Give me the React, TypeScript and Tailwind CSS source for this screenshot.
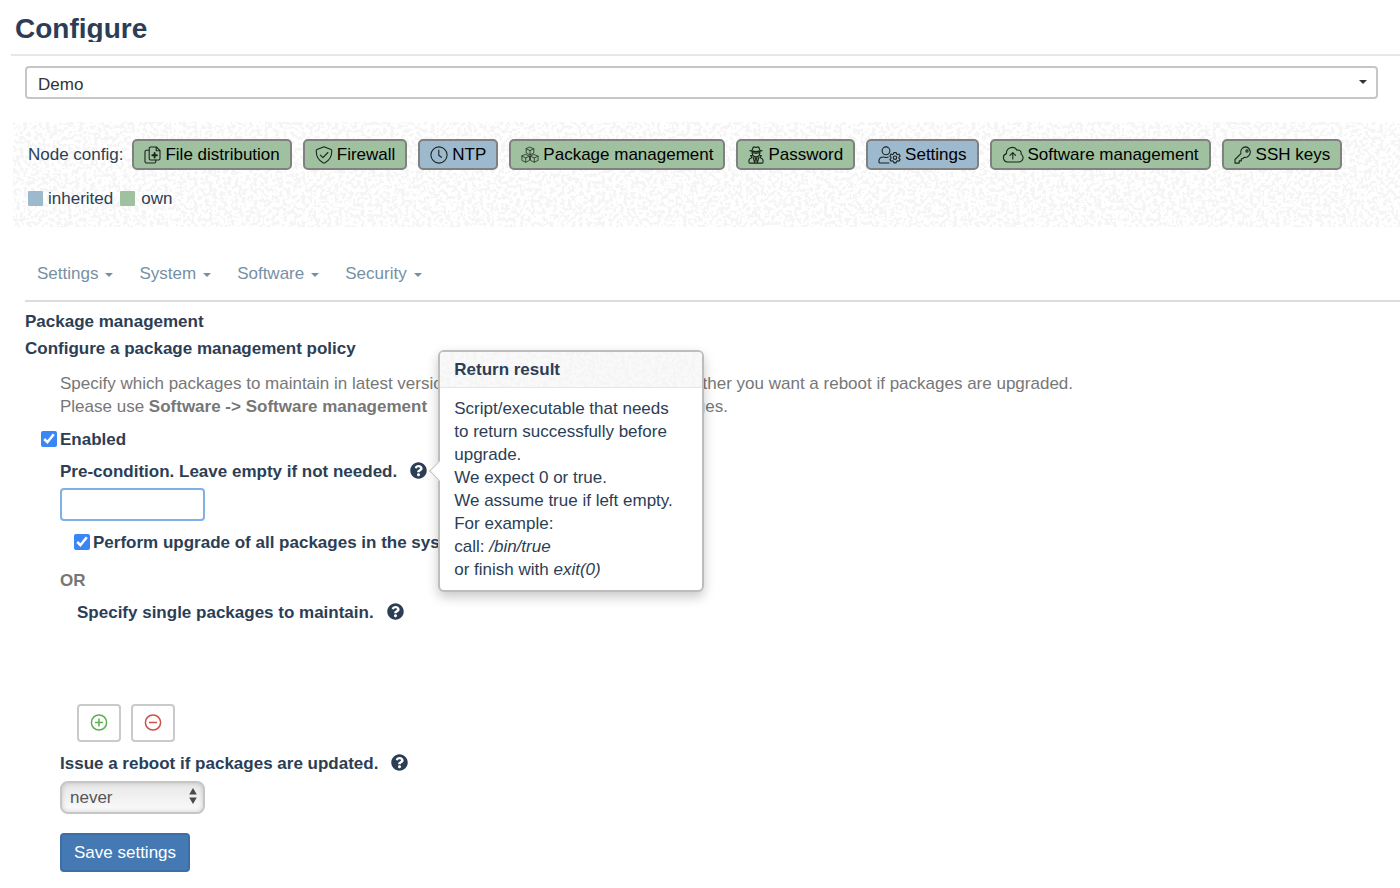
import type { ReactNode } from "react";
import { FaQuestionCircle } from "react-icons/fa";

function Glyph({ width = 18, children }: { width?: number; children: ReactNode }) {
  return (
    <svg
      aria-hidden="true"
      width={width}
      height={18}
      viewBox={`0 0 ${width} 18`}
      fill="none"
      stroke="#1c241c"
      strokeWidth={1.1}
      strokeLinecap="round"
      strokeLinejoin="round"
      className="shrink-0"
    >
      {children}
    </svg>
  );
}

const FileIcon = () => (
  <Glyph width={17}>
    <path d="M6.6 1h5.8L16 4.6v8a1.4 1.4 0 0 1-1.4 1.4h-8a1.4 1.4 0 0 1-1.4-1.4V2.4A1.4 1.4 0 0 1 6.6 1z" />
    <path d="M12.2 1.2v3.6h3.6" />
    <path d="M5 4.2H2.4A1.4 1.4 0 0 0 1 5.6v10A1.4 1.4 0 0 0 2.4 17h8a1.4 1.4 0 0 0 1.4-1.4V14" />
    <path d="M10.6 6.900v4.600M8.300 9.200h4.600" strokeWidth={1.9} />
  </Glyph>
);

const ShieldIcon = () => (
  <Glyph>
    <path d="M9 .8l7 2.800c.5.2.8.6.8 1.100 0 6-3.200 10.300-7.200 12.200a1.300 1.300 0 0 1-1.200 0C4.400 15 1.200 10.700 1.200 4.700c0-.5.3-.9.8-1.100z" />
    <path d="M5.400 9.200l2.500 2.500 5-5.200" />
  </Glyph>
);

const ClockIcon = () => (
  <Glyph>
    <circle cx="9" cy="9" r="8.100" />
    <path d="M8.800 4v5.300l2.600 2" />
  </Glyph>
);

const cube = (x: number, y: number) =>
  `M${x} ${y}l3.8 1.6v4.2l-3.8 1.8-3.8-1.8v-4.2zM${x - 3.8} ${y + 1.6}l3.8 1.7 3.8-1.7M${x} ${y + 3.3}v4.3`;

const CubesIcon = () => (
  <Glyph>
    <g strokeWidth={0.75}>
      <path d={cube(9, 1.2)} />
      <path d={cube(4.7, 8.6)} />
      <path d={cube(13.3, 8.6)} />
    </g>
  </Glyph>
);

const SecretIcon = () => (
  <Glyph width={16}>
    <path d="M4.200 3.900C4.600 2.300 5.200.9 6.200.9c.7 0 1.100.5 1.800.5s1.100-.5 1.800-.5c1 0 1.600 1.400 2 3" />
    <path d="M2 4.600c3.600 1 8.400 1 12 0" />
    <path d="M4.200 5.400v1.400c0 2.200 1.600 4 3.800 4s3.800-1.800 3.800-4V5.400" />
    <path d="M4.400 6.900h2.800l.8.4.8-.4h2.800" strokeWidth={1.4} />
    <path d="M4.300 9.600H2.700l1 2.200C2 12.400.9 13.400.9 15v1c0 .6.5 1.100 1.100 1.100h12c.6 0 1.100-.5 1.100-1.100v-1c0-1.600-1.100-2.600-2.800-3.200l1-2.200h-1.600" />
    <path d="M5 11l1.700 5.800L7.500 13 6.800 11.700h2.400L8.500 13l.8 3.800L11 11" />
  </Glyph>
);

const UserGearIcon = () => (
  <Glyph width={23}>
    <circle cx="8" cy="4.800" r="3.900" />
    <path d="M11 17H2.200A1.300 1.300 0 0 1 .9 15.700c0-2.800 1.800-4.700 4.400-4.700 1 0 1.500.5 2.700.5 1 0 1.500-.4 2.300-.5" />
    <circle cx="17" cy="11.700" r="1.700" />
    <path d="M15.900 6.500h2.200l.4 1.500 1 .6 1.500-.5 1.100 1.900-1.100 1.100v1.200l1.100 1.100-1.100 1.900-1.500-.5-1 .6-.4 1.500h-2.200l-.4-1.500-1-.6-1.500.5-1.100-1.900 1.100-1.100v-1.200L11.900 10 13 8.100l1.500.5 1-.6z" />
  </Glyph>
);

const CloudIcon = () => (
  <Glyph width={22}>
    <path d="M5.400 16h11.400a4.300 4.300 0 0 0 2.300-7.900 3.300 3.300 0 0 0-4.100-4A5.700 5.700 0 0 0 4.500 7.600 4.300 4.300 0 0 0 5.400 16z" />
    <path d="M10.800 13V6.800M8 9.400l2.800-2.800 2.800 2.800" />
  </Glyph>
);

const KeyIcon = () => (
  <Glyph>
    <path d="M11.900.9a5.200 5.200 0 0 0-5 6.700L1 13.500v3.600h4.200v-2.200h2.100v-2.100h1.300l1.400-1.400A5.200 5.200 0 1 0 11.900.9z" />
    <circle cx="13" cy="5" r="1.100" />
  </Glyph>
);

type NodeConfig = { label: string; icon: ReactNode; inherited?: boolean };

const nodeConfigs: NodeConfig[] = [
  { label: "File distribution", icon: <FileIcon /> },
  { label: "Firewall", icon: <ShieldIcon /> },
  { label: "NTP", icon: <ClockIcon />, inherited: true },
  { label: "Package management", icon: <CubesIcon /> },
  { label: "Password", icon: <SecretIcon /> },
  { label: "Settings", icon: <UserGearIcon />, inherited: true },
  { label: "Software management", icon: <CloudIcon /> },
  { label: "SSH keys", icon: <KeyIcon /> },
];

/* Faint paper-like speckle used behind panels and popover titles. */
function Speckle() {
  return (
    <svg aria-hidden="true" className="pointer-events-none absolute inset-0 h-full w-full">
      <filter id="speckle" x="0" y="0" width="100%" height="100%" colorInterpolationFilters="sRGB">
        <feTurbulence type="fractalNoise" baseFrequency="0.27" numOctaves={2} seed={4} />
        <feColorMatrix values="0 0 0 0 0.961  0 0 0 0 0.961  0 0 0 0 0.965  22 0 0 0 -11" />
      </filter>
      <rect width="100%" height="100%" filter="url(#speckle)" />
    </svg>
  );
}

function Caret() {
  return (
    <svg aria-hidden="true" width={8} height={4} viewBox="0 0 8 4" className="shrink-0">
      <path d="M0 0h8L4 4z" fill="currentColor" />
    </svg>
  );
}

function Help({ label, children }: { label: string; children?: ReactNode }) {
  return (
    <span className="relative mb-[2px] ml-[13px] inline-flex">
      <button type="button" aria-label={label} className="block">
        <FaQuestionCircle size={17} />
      </button>
      {children}
    </span>
  );
}

function Popover() {
  return (
    <div
      role="tooltip"
      className="absolute top-1/2 left-full z-10 ml-[11px] w-[266px] -translate-y-1/2 rounded-md border-2 border-[#bdbdbd] bg-white font-normal shadow-[0_5px_12px_rgba(0,0,0,0.22)]"
    >
      <span className="absolute top-1/2 -left-[8px] h-[14px] w-[14px] -translate-y-1/2 rotate-45 border-b border-l border-[#c4c4c4] bg-white" />
      <h3 className="relative overflow-hidden rounded-t-[4px] border-b border-[#e6e6e6] bg-[#f9f9fa] px-[14px] py-[6px] font-bold">
        <Speckle />
        <span className="relative">Return result</span>
      </h3>
      <div className="relative py-[9px] pr-5 pl-[14px]">
        Script/executable that needs to return successfully before upgrade.
        <br />
        We expect 0 or true.
        <br />
        We assume true if left empty.
        <br />
        For example:
        <br />
        call: <i>/bin/true</i>
        <br />
        or finish with <i>exit(0)</i>
      </div>
    </div>
  );
}

export default function App() {
  return (
    <main className="min-h-screen overflow-x-hidden bg-white font-['Liberation_Sans',Arial,sans-serif] text-[17px] leading-[23px] text-[#2c3e55]">
      <header className="ml-[11px] border-b-2 border-[#e7e7e7] pt-[15px] pb-3 pl-1">
        <h1 className="overflow-hidden text-[28px] leading-[27px] font-bold">Configure</h1>
      </header>

      <div className="relative mt-[10px] mr-[22px] ml-[25px]">
        <select
          aria-label="Node"
          className="block h-[33px] w-full appearance-none rounded border-2 border-[#c6c6c6] bg-white pt-1 pl-[11px] text-[#333]"
        >
          <option>Demo</option>
        </select>
        <span className="pointer-events-none absolute top-[14px] right-[11px] text-[#333]">
          <Caret />
        </span>
      </div>

      <section className="relative mt-[23px] ml-[13px] pt-[17px] pb-[17px] pl-[15px]">
        <Speckle />
        <div className="relative flex items-center">
          <span className="mr-[9px] whitespace-nowrap">Node config:</span>
          <div className="flex gap-[11px]">
            {nodeConfigs.map(({ label, icon, inherited }) => (
              <button
                key={label}
                type="button"
                className={`flex h-[31px] items-center gap-1 rounded-[5px] border-2 border-[#808080] px-[10px] whitespace-nowrap text-black ${
                  inherited ? "bg-[#9db9cd]" : "bg-[#9fc19f]"
                }`}
              >
                {icon}
                {label}
              </button>
            ))}
          </div>
        </div>
        <div className="relative mt-[17px] flex items-center">
          <span className="mr-[5px] h-[15px] w-[15px] rounded-[1px] bg-[#9db9cd]" />
          inherited
          <span className="mr-[6px] ml-[7px] h-[15px] w-[15px] rounded-[1px] bg-[#9fc19f]" />
          own
        </div>
      </section>

      <nav className="mt-[35px] ml-[25px] flex gap-[26px] border-b-2 border-[#dcdcdc] pb-[15px] pl-3 text-[#7690a5]">
        {["Settings", "System", "Software", "Security"].map((name) => (
          <a key={name} href="#" className="flex items-center gap-[7px]">
            {name}
            <span className="mt-[3px]">
              <Caret />
            </span>
          </a>
        ))}
      </nav>

      <form className="ml-[25px]" onSubmit={(event) => event.preventDefault()}>
        <h2 className="mt-2 font-bold">Package management</h2>
        <h3 className="mt-1 font-bold">Configure a package management policy</h3>

        <div className="pl-[35px]">
          <p className="mt-3 whitespace-nowrap text-[#777]">
            Specify which packages to maintain in latest versions in the systems and choose whether you want a
            reboot if packages are upgraded.
            <br />
            Please use <b className="mr-2">Software -&gt; Software management</b> to install and remove single packages.
          </p>

          <label className="mt-[10px] -ml-[19px] flex items-center gap-[3px] font-bold">
            <input type="checkbox" defaultChecked className="mb-[2px] h-4 w-4 accent-[#3b86f7]" />
            Enabled
          </label>

          <div className="mt-[9px] flex items-center font-bold">
            <label htmlFor="precondition">Pre-condition. Leave empty if not needed.</label>
            <Help label="About the pre-condition">
              <Popover />
            </Help>
          </div>
          <input
            id="precondition"
            type="text"
            className="mt-[5px] block h-[33px] w-[145px] rounded border-2 border-[#7fb1e6] px-2 outline-none"
          />

          <label className="mt-[10px] ml-[14px] flex items-center gap-[3px] font-bold">
            <input type="checkbox" defaultChecked className="mb-[2px] h-4 w-4 accent-[#3b86f7]" />
            Perform upgrade of all packages in the system.
          </label>

          <p className="mt-[15px] font-bold text-[#777]">OR</p>

          <div className="mt-[9px] flex items-center pl-[17px] font-bold">
            Specify single packages to maintain.
            <Help label="About single packages" />
          </div>
          <div className="mt-20 flex gap-[10px] pl-[17px]">
            <button
              type="button"
              aria-label="Add package"
              className="flex h-[38px] w-[44px] items-center justify-center rounded border-2 border-[#cacaca] text-[#5cb054]"
            >
              <svg width={18} height={18} viewBox="0 0 18 18" fill="none" stroke="currentColor" strokeWidth={1.5}>
                <circle cx="9" cy="8.500" r="7.600" />
                <path d="M9 4.500v8M5 8.500h8" />
              </svg>
            </button>
            <button
              type="button"
              aria-label="Remove package"
              className="flex h-[38px] w-[44px] items-center justify-center rounded border-2 border-[#cacaca] text-[#cf4f49]"
            >
              <svg width={18} height={18} viewBox="0 0 18 18" fill="none" stroke="currentColor" strokeWidth={1.5}>
                <circle cx="9" cy="8.500" r="7.600" />
                <path d="M5 8.500h8" />
              </svg>
            </button>
          </div>

          <div className="mt-[10px] flex items-center font-bold">
            <label htmlFor="reboot">Issue a reboot if packages are updated.</label>
            <Help label="About rebooting" />
          </div>
          <div className="relative mt-[6px] w-[145px]">
            <select
              id="reboot"
              className="block h-[33px] w-full appearance-none rounded-lg border-2 border-[#c6c6c6] bg-linear-to-b from-[#e7e7e8] to-[#fbfbfb] pl-2 text-[#555] shadow-[inset_0_0_5px_rgba(0,0,0,0.18)]"
            >
              <option>never</option>
            </select>
            <svg
              aria-hidden="true"
              width={8}
              height={16}
              viewBox="0 0 8 16"
              className="pointer-events-none absolute top-[7px] right-2"
            >
              <path d="M4 0l3.800 6.500H.2zM4 16L.2 9.500h7.600z" fill="#4a4a4a" />
            </svg>
          </div>

          <button
            type="submit"
            className="mt-[19px] h-[39px] rounded border-2 border-[#3d6fa6] bg-[#4479b3] px-[12px] text-white"
          >
            Save settings
          </button>
        </div>
      </form>
    </main>
  );
}
